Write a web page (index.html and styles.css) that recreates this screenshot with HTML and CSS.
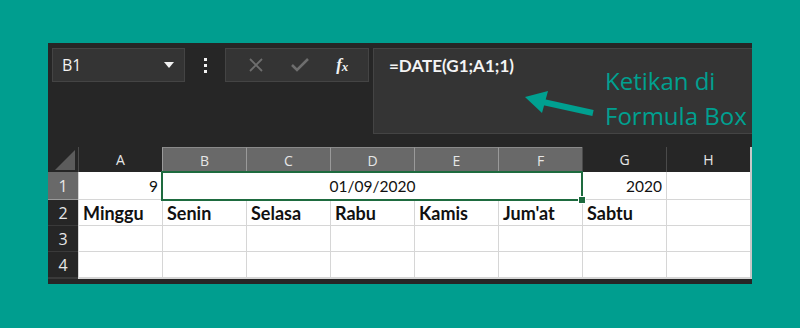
FILE: index.html
```html
<!DOCTYPE html>
<html>
  <head>
    <meta charset="utf-8">
    <title>Formula DATE</title>
    <link rel="stylesheet" href="styles.css">
  </head>
  <body>
    <div class="sheet">
      <div class="toolbar">
        <div class="name-box">
          <span>B1</span>
          <svg class="caret" width="10" height="6" viewBox="0 0 10 6"><path d="M0 0 L10 0 L5 6 Z" fill="#f2f2f2"/></svg>
        </div>
        <div class="grip">
          <span></span><span></span><span></span>
        </div>
        <div class="fx-group">
          <svg width="16" height="16" viewBox="0 0 16 16"><path d="M2 2 L14 14 M14 2 L2 14" stroke="#6e6e6e" stroke-width="1.8"/></svg>
          <svg width="18" height="16" viewBox="0 0 18 16"><path d="M1 8 L6 13 L17 2" stroke="#6e6e6e" stroke-width="2.6" fill="none"/></svg>
          <span class="fx">f<sub>x</sub></span>
        </div>
        <div class="formula-box">
          <span class="formula">=DATE(G1;A1;1)</span>
          <svg class="arrow" width="80" height="30" viewBox="0 0 80 30">
            <path d="M68 26 L18 15" stroke="#00a090" stroke-width="6"/>
            <path d="M0 10 L23 4 L17 26 Z" fill="#00a090"/>
          </svg>
          <div class="note">Ketikan di<br>Formula Box</div>
        </div>
      </div>

      <div class="grid">
        <div class="corner">
          <svg width="20" height="20" viewBox="0 0 20 20"><path d="M20 0 L20 20 L0 20 Z" fill="#5c5c5c"/></svg>
        </div>
        <div class="col-head">A</div>
        <div class="col-head sel">B</div>
        <div class="col-head sel">C</div>
        <div class="col-head sel">D</div>
        <div class="col-head sel">E</div>
        <div class="col-head sel">F</div>
        <div class="col-head">G</div>
        <div class="col-head">H</div>

        <div class="row-head sel">1</div>
        <div class="cell num">9</div>
        <div class="cell merged">01/09/2020</div>
        <div class="cell num">2020</div>
        <div class="cell"></div>

        <div class="row-head">2</div>
        <div class="cell day">Minggu</div>
        <div class="cell day">Senin</div>
        <div class="cell day">Selasa</div>
        <div class="cell day">Rabu</div>
        <div class="cell day">Kamis</div>
        <div class="cell day">Jum'at</div>
        <div class="cell day">Sabtu</div>
        <div class="cell"></div>

        <div class="row-head">3</div>
        <div class="cell"></div><div class="cell"></div><div class="cell"></div><div class="cell"></div>
        <div class="cell"></div><div class="cell"></div><div class="cell"></div><div class="cell"></div>

        <div class="row-head">4</div>
        <div class="cell"></div><div class="cell"></div><div class="cell"></div><div class="cell"></div>
        <div class="cell"></div><div class="cell"></div><div class="cell"></div><div class="cell"></div>

        <div class="row-head"></div>
        <div class="cell"></div><div class="cell"></div><div class="cell"></div><div class="cell"></div>
        <div class="cell"></div><div class="cell"></div><div class="cell"></div><div class="cell"></div>
      </div>
    </div>
  </body>
</html>
```

FILE: styles.css
```css
:root {
  --teal: #009e8f;
  --dark: #262626;
  --box: #343434;
  --box-border: #444;
  --head-sel: #696969;
  --line: #d6d6d6;
  --green: #1e6b3f;
}

body {
  margin: 0;
  padding: 43px 48px 0;
  height: 328px;
  box-sizing: border-box;
  background: var(--teal);
  overflow: hidden;
}

.sheet {
  width: 704px;
  height: 241px;
  background: var(--dark);
  overflow: hidden;
  font-family: "Open Sans", sans-serif;
}

/* top bar */
.toolbar {
  display: flex;
  align-items: flex-start;
  height: 104px;
  padding: 5px 0 0 4px;
  box-sizing: border-box;
}

.name-box {
  display: flex;
  align-items: center;
  justify-content: space-between;
  width: 133px;
  height: 34px;
  box-sizing: border-box;
  padding: 0 10px 0 9px;
  background: var(--box);
  border: 1px solid var(--box-border);
  color: #f2f2f2;
  font-size: 16px;
}

.grip {
  display: flex;
  flex-direction: column;
  align-items: center;
  gap: 3px;
  width: 40px;
  padding-top: 10px;
}

.grip span {
  width: 3px;
  height: 3px;
  background: #f2f2f2;
}

.fx-group {
  display: flex;
  align-items: center;
  justify-content: space-around;
  width: 144px;
  height: 34px;
  box-sizing: border-box;
  padding: 0 6px 0 8px;
  background: var(--box);
  border: 1px solid var(--box-border);
}

.fx {
  color: #f2f2f2;
  font-family: "Liberation Serif", serif;
  font-style: italic;
  font-weight: bold;
  font-size: 17px;
}

.fx sub {
  font-size: 13px;
  vertical-align: -1px;
}

.formula-box {
  position: relative;
  width: 379px;
  height: 86px;
  margin-left: 4px;
  box-sizing: border-box;
  background: var(--box);
  border: 1px solid var(--box-border);
  border-right: none;
}

.formula {
  position: absolute;
  left: 15px;
  top: 6px;
  color: #f4f4f4;
  font-family: "Lato", sans-serif;
  font-weight: bold;
  font-size: 17px;
}

.arrow {
  position: absolute;
  left: 151px;
  top: 38px;
}

.note {
  position: absolute;
  left: 231px;
  top: 14px;
  color: #00a090;
  font-size: 24px;
  line-height: 35px;
  white-space: nowrap;
}

/* sheet grid */
.grid {
  display: grid;
  grid-template-columns: 30px repeat(8, 84px);
  grid-template-rows: 25px 28px 26px 26px 26px;
  width: 702px;
  border-right: 2px solid #c8c8c8;
}

.corner {
  display: flex;
  align-items: flex-end;
  justify-content: flex-end;
  padding: 0 3px 2px 0;
}

.col-head, .row-head {
  display: flex;
  align-items: center;
  justify-content: center;
  color: #e6e6e6;
  font-size: 14px;
  box-sizing: border-box;
}

.col-head {
  border-left: 1px solid #4a4a4a;
}

.col-head.sel {
  background: var(--head-sel);
  border-left-color: #9a9a9a;
  border-top: 1px solid #8a8a8a;
}

.row-head {
  font-size: 16px;
  border-bottom: 1px solid #3a3a3a;
}

.row-head.sel {
  background: var(--head-sel);
  border-bottom-color: #9a9a9a;
}

.cell {
  display: flex;
  align-items: center;
  padding: 0 4px;
  background: #fff;
  border-left: 1px solid var(--line);
  border-bottom: 1px solid var(--line);
  color: #111;
  font-family: "Lato", sans-serif;
  font-size: 15.5px;
  box-sizing: border-box;
}

.cell.num {
  justify-content: flex-end;
}

.cell.day {
  font-weight: bold;
  font-size: 18px;
}

.cell.merged {
  position: relative;
  grid-column: span 5;
  justify-content: center;
}

.cell.merged::after {
  content: "";
  position: absolute;
  inset: -1px -1px -2px -2px;
  border: 2px solid var(--green);
}

.cell.merged::before {
  content: "";
  position: absolute;
  right: -4px;
  bottom: -5px;
  width: 6px;
  height: 6px;
  background: var(--green);
  border: 1px solid #fff;
  z-index: 1;
}
```
